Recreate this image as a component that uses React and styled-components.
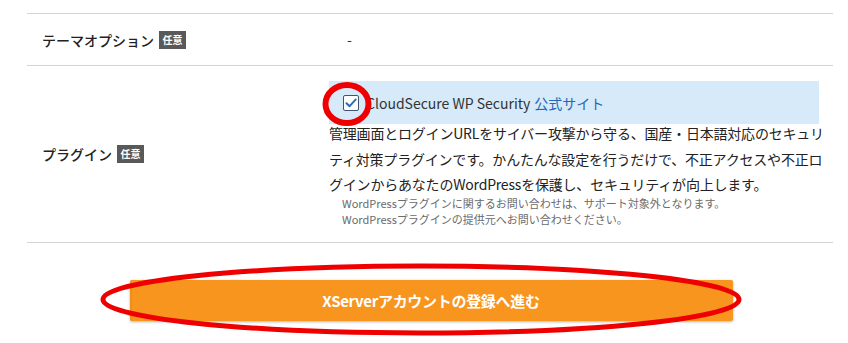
import React from "react";
import styled, { createGlobalStyle } from "styled-components";

const Global = createGlobalStyle`
  html, body { margin: 0; padding: 0; background: #fff; }
  body {
    font-family: "Noto Sans CJK JP", "Noto Sans", "Liberation Sans", sans-serif;
    color: #222;
  }
`;

const Page = styled.div`
  position: relative;
  width: 848px;
  height: 343px;
  overflow: hidden;
  padding-top: 13px;
  box-sizing: border-box;
`;

const Table = styled.div`
  margin: 0 15px 0 27px;
  width: 806px;
  border-top: 1px solid #d4d4d4;
`;

const Row = styled.div`
  display: grid;
  grid-template-columns: 302px 1fr;
  border-bottom: 1px solid #d4d4d4;
  min-height: ${(p) => p.$min || 0}px;
`;

const Label = styled.div`
  display: flex;
  align-items: center;
  gap: 5px;
  padding-left: 15px;
  font-size: 14px;
  font-weight: 500;
  color: #222;
`;

const Badge = styled.span`
  display: inline-flex;
  align-items: center;
  justify-content: center;
  width: 27px;
  height: 18px;
  background: #595959;
  color: #fff;
  font-size: 10px;
  font-weight: 700;
  line-height: 1;
`;

const Value = styled.div`
  display: flex;
  flex-direction: column;
  justify-content: center;
  padding: ${(p) => p.$pad || "0"};
`;

const Dash = styled.span`
  font-size: 14px;
  margin-left: 18px;
  margin-top: -2px;
  color: #333;
`;

const OptionBox = styled.label`
  display: flex;
  align-items: center;
  gap: 7px;
  width: 490px;
  height: 43px;
  box-sizing: border-box;
  padding-left: 14px;
  background: #d6eaf9;
  font-size: 14px;
  color: #333;
`;

const Check = styled.span`
  display: inline-flex;
  align-items: center;
  justify-content: center;
  width: 16px;
  height: 16px;
  box-sizing: border-box;
  border: 1px solid #3f546e;
  border-radius: 2px;
  background: #fff;
`;

const Link = styled.a`
  color: #1f67b8;
  text-decoration: none;
  margin-left: 4px;
`;

const Desc = styled.p`
  margin: -3px 0 0 0;
  font-size: 14px;
  line-height: 25.5px;
  color: #222;
  white-space: nowrap;
  letter-spacing: -0.2px;
`;

const Note = styled.p`
  margin: -2.5px 0 0 13px;
  font-size: 11px;
  line-height: 16px;
  color: #6a6a6a;
`;

const ButtonWrap = styled.div`
  display: flex;
  justify-content: center;
  padding: 37px 0 0 14px;
`;

const Button = styled.button`
  width: 603px;
  height: 41px;
  border: none;
  border-radius: 2px;
  background: #f7951f;
  box-shadow: 0 1px 3px rgba(0, 0, 0, 0.3), inset 2px 0 0 rgba(0,0,0,0.04);
  color: #fff;
  font-family: inherit;
  font-size: 15px;
  font-weight: 700;
  letter-spacing: -0.3px;
  cursor: pointer;
`;

const Annotations = styled.svg`
  position: absolute;
  left: 0;
  top: 0;
  pointer-events: none;
`;

export default function App() {
  return (
    <>
      <Global />
      <Page>
        <Table>
          <Row $min={51}>
            <Label>
              テーマオプション<Badge>任意</Badge>
            </Label>
            <Value>
              <Dash>-</Dash>
            </Value>
          </Row>
          <Row>
            <Label>
              プラグイン<Badge>任意</Badge>
            </Label>
            <Value $pad="15px 0 15px 0">
              <OptionBox>
                <Check>
                  <svg width="12" height="10" viewBox="0 0 12 10">
                    <path d="M1.5 5.2 L4.6 8.2 L10.6 1.6" fill="none" stroke="#2b6cb5" strokeWidth="2" strokeLinecap="round" strokeLinejoin="round" />
                  </svg>
                </Check>
                <span>
                  CloudSecure WP Security<Link href="#">公式サイト</Link>
                </span>
              </OptionBox>
              <Desc>
                管理画面とログインURLをサイバー攻撃から守る、国産・日本語対応のセキュリ
                <br />
                ティ対策プラグインです。かんたんな設定を行うだけで、不正アクセスや不正ロ
                <br />
                グインからあなたのWordPressを保護し、セキュリティが向上します。
              </Desc>
              <Note>
                WordPressプラグインに関するお問い合わせは、サポート対象外となります。
                <br />
                WordPressプラグインの提供元へお問い合わせください。
              </Note>
            </Value>
          </Row>
        </Table>
        <ButtonWrap>
          <Button>XServerアカウントの登録へ進む</Button>
        </ButtonWrap>
        <Annotations width="848" height="343" viewBox="0 0 848 343">
          <ellipse cx="347" cy="104" rx="21.5" ry="19" fill="none" stroke="#ee0000" strokeWidth="6" />
          <ellipse cx="421" cy="299.5" rx="318" ry="33.5" fill="none" stroke="#ee0000" strokeWidth="5" />
        </Annotations>
      </Page>
    </>
  );
}
